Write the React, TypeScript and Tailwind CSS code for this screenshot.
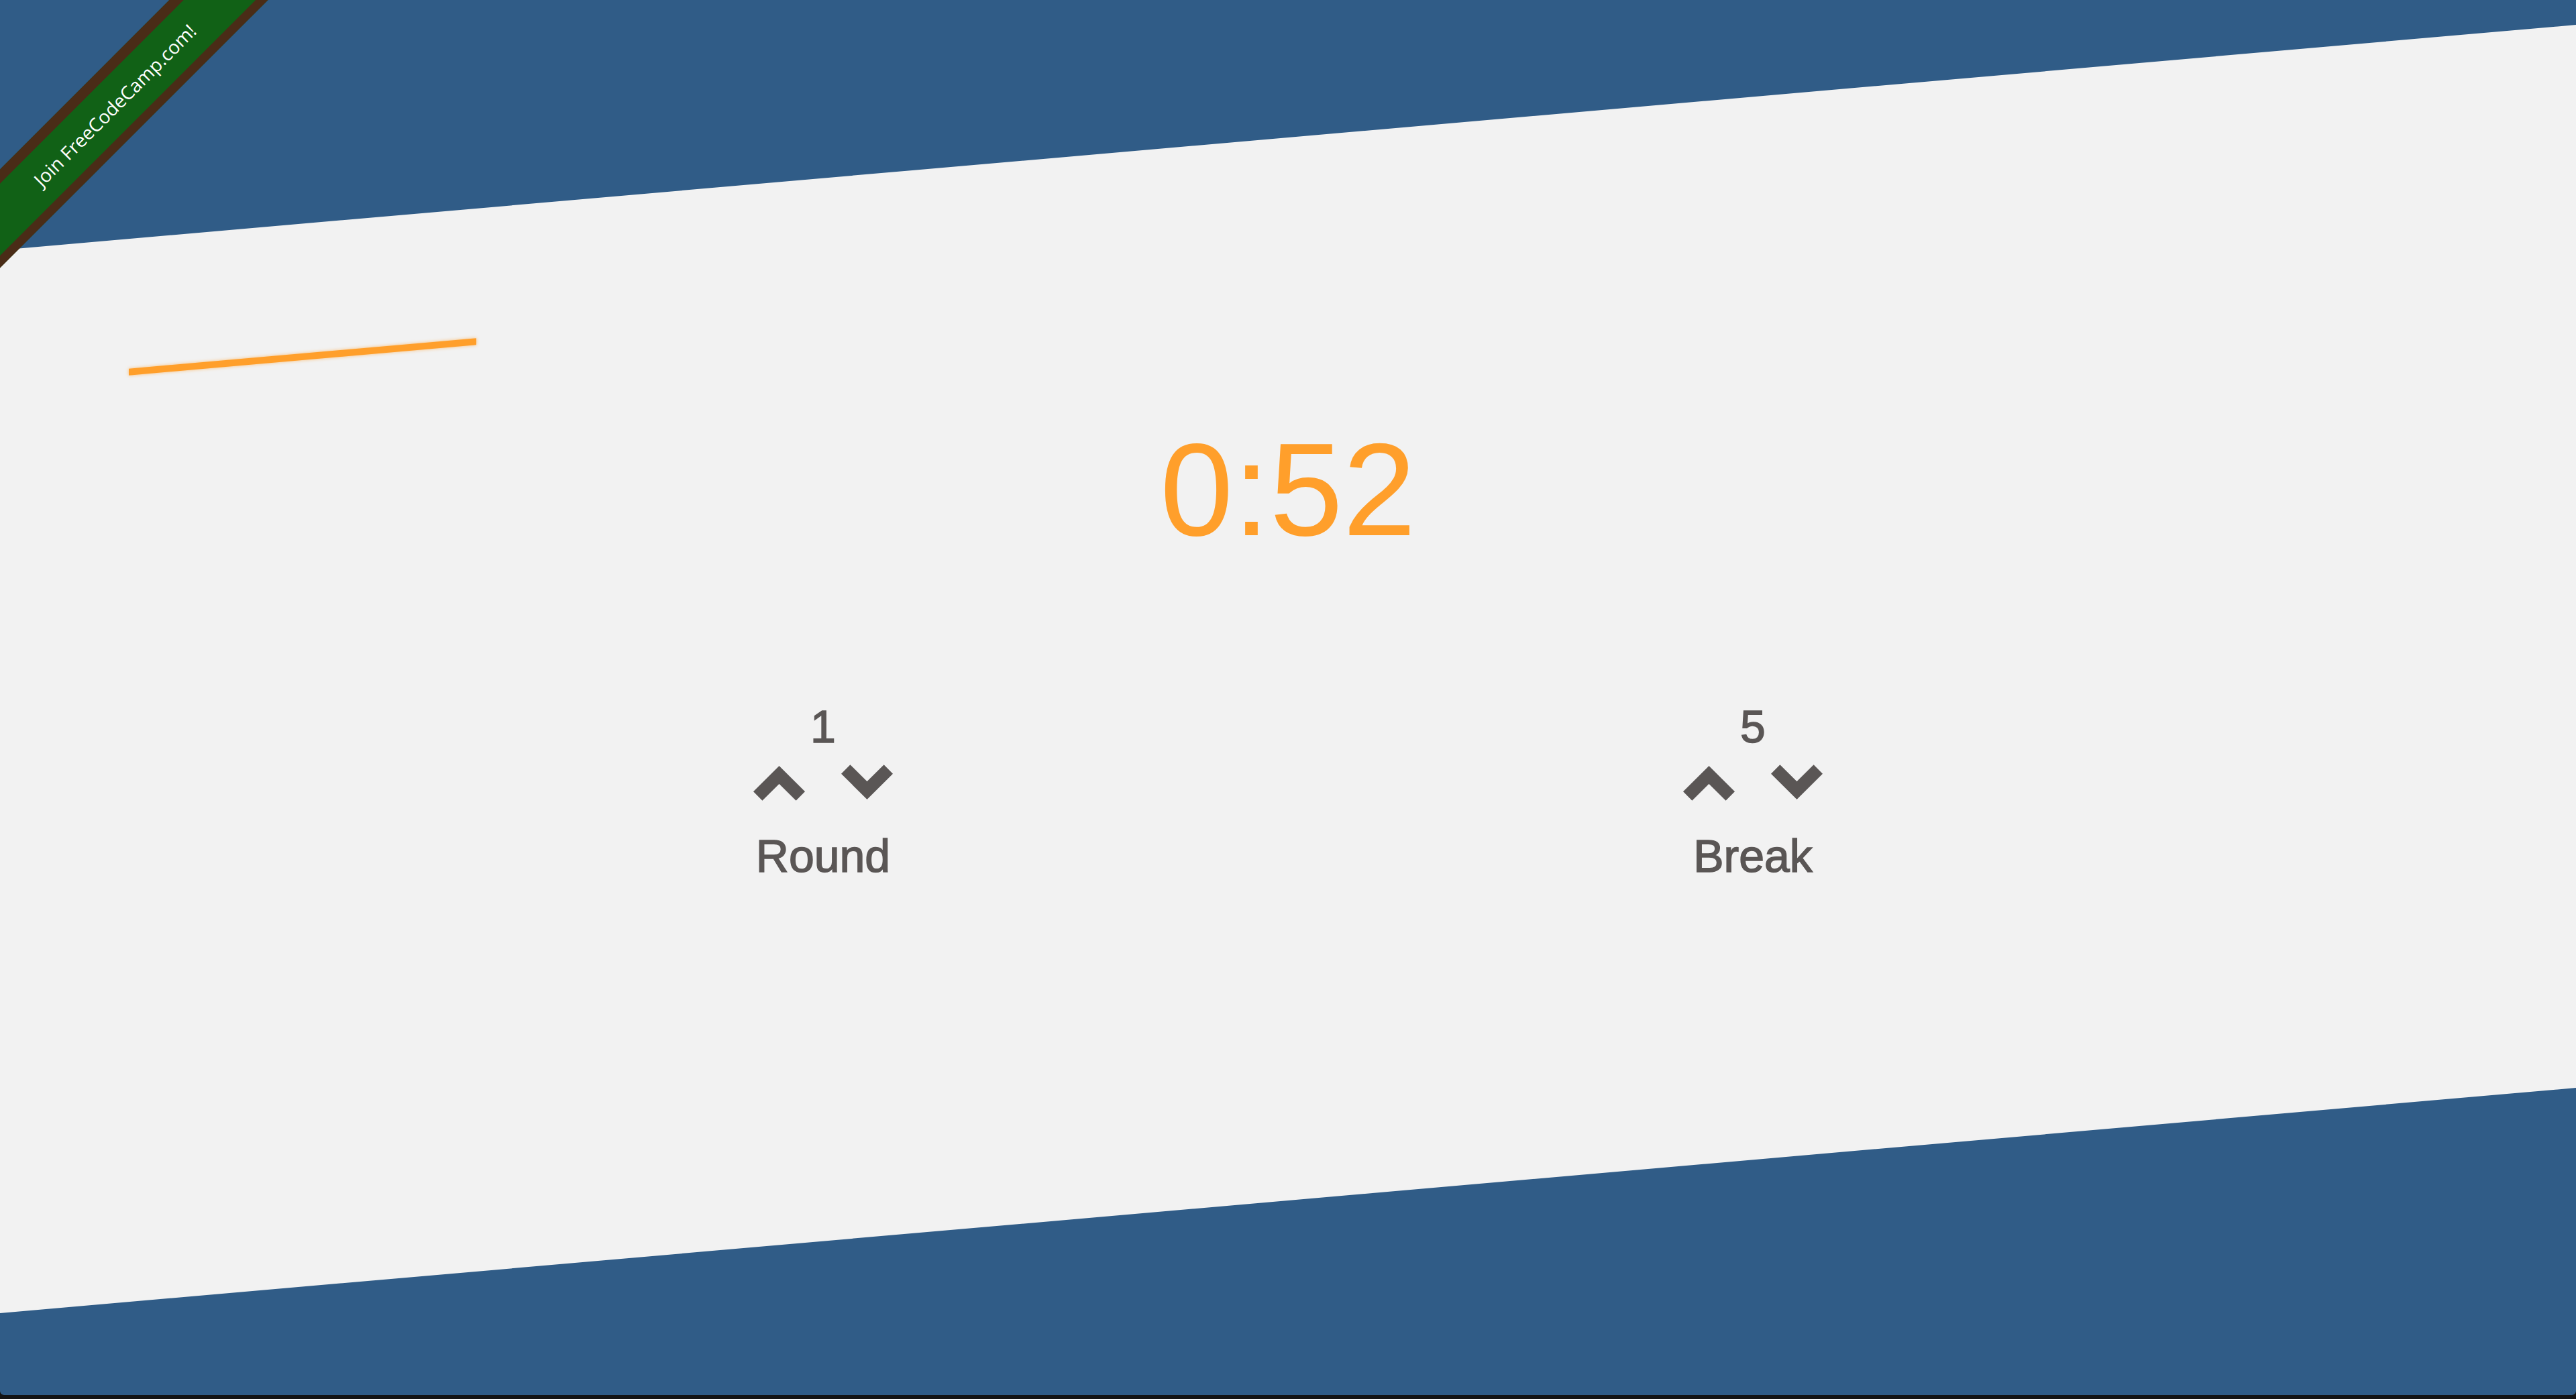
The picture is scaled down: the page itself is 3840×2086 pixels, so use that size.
import React from "react";

function ChevronUp() {
  return (
    <svg width="77" height="52" viewBox="0 0 77 52" className="block">
      <polyline points="6.7,45 38.5,13.4 70.3,45" fill="none" stroke="#5a5655" strokeWidth="19" strokeLinejoin="miter" strokeLinecap="butt" />
    </svg>
  );
}

function ChevronDown() {
  return (
    <svg width="77" height="52" viewBox="0 0 77 52" className="block">
      <polyline points="6.7,7 38.5,38.6 70.3,7" fill="none" stroke="#5a5655" strokeWidth="19" strokeLinejoin="miter" strokeLinecap="butt" />
    </svg>
  );
}

function Control({ value, label }: { value: number; label: string }) {
  return (
    <div className="flex w-[400px] flex-col items-center text-[#5a5655] [font-family:'Liberation_Sans',Arial,sans-serif]">
      <div className="h-[68px] text-[68px] leading-none [-webkit-text-stroke:1.5px_#5a5655]">{value}</div>
      <div className="mt-[25px] flex items-start gap-[54px]">
        <button className="block"><ChevronUp /></button>
        <button className="-mt-[2px] block"><ChevronDown /></button>
      </div>
      <div className="mt-[48px] text-[68px] leading-none [-webkit-text-stroke:1.5px_#5a5655]">{label}</div>
    </div>
  );
}

export default function App() {
  return (
    <div className="flex h-[2086px] w-full flex-col overflow-hidden bg-[#141414]">
      <div className="relative h-[2080px] w-full overflow-hidden rounded-b-[6px] bg-[#305c87]">
        <div className="mt-[205px] h-[1585px] w-full bg-[#f2f2f2] [transform:skewY(-5deg)]">
          <div className="flex h-full w-full flex-col [transform:skewY(5deg)]">
            <div className="ml-[192px] mt-[322px] h-[10px] w-[518px] bg-[#ff9f2b] shadow-[0_0_5px_rgba(255,159,43,0.6)] [transform:skewY(-5deg)]" />
            <div className="mt-[96px] text-center text-[196px] leading-none text-[#ff9f2b] [font-family:'Liberation_Sans',Arial,sans-serif]">
              0:52
            </div>
            <div className="mt-[220px] flex justify-center gap-[986px]">
              <Control value={1} label="Round" />
              <Control value={5} label="Break" />
            </div>
          </div>
        </div>
        <div className="absolute left-[-137px] top-[111px] flex h-[104px] w-[600px] -rotate-45 items-center justify-center border-t-[15px] border-b-[13px] border-[#4a2c17] bg-[#116116]">
          <span className="pl-[20px] text-[28px] text-white [font-family:'Open_Sans',sans-serif]">Join FreeCodeCamp.com!</span>
        </div>
      </div>
    </div>
  );
}
